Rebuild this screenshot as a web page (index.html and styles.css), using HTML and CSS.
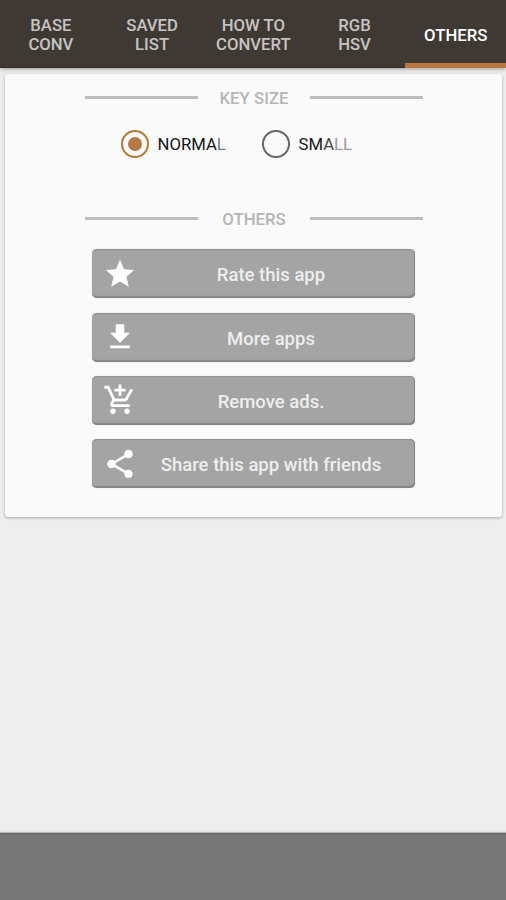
FILE: index.html
```html
<!DOCTYPE html>
<html lang="en">
<head>
<meta charset="utf-8">
<title>Others</title>
<link rel="stylesheet" href="styles.css">
</head>
<body>
<nav class="tabs">
  <a class="tab">BASE<br>CONV</a>
  <a class="tab">SAVED<br>LIST</a>
  <a class="tab">HOW TO<br>CONVERT</a>
  <a class="tab">RGB<br>HSV</a>
  <a class="tab active">OTHERS</a>
</nav>
<main class="card">
  <h2 class="heading"><span>KEY SIZE</span></h2>
  <div class="radios">
    <div class="radio checked"><i class="ring"></i><span>NORMA<span class="fade">L</span></span></div>
    <div class="radio"><i class="ring"></i><span>SM<span class="dim">A</span><span class="fade">LL</span></span></div>
  </div>
  <h2 class="heading"><span>OTHERS</span></h2>
  <div class="buttons">
    <button class="button"><svg viewBox="0 0 24 24"><path d="M12 17.27 18.18 21l-1.64-7.03L22 9.24l-7.19-.61L12 2 9.19 8.63 2 9.24l5.46 4.73L5.82 21z"/></svg><span>Rate this app</span></button>
    <button class="button"><svg viewBox="0 0 24 24"><path d="M19 9h-4V3H9v6H5l7 7 7-7zM5 18v2h14v-2H5z"/></svg><span>More apps</span></button>
    <button class="button"><svg viewBox="0 0 24 24"><path d="M11 9h2V6h3V4h-3V1h-2v3H8v2h3v3zm-4 9c-1.1 0-1.99.9-1.99 2S5.900 22 7 22s2-.9 2-2-.9-2-2-2zm10 0c-1.1 0-1.99.9-1.99 2s.89 2 1.990 2 2-.9 2-2-.9-2-2-2zm-9.830-3.250.03-.12.9-1.630h7.450c.75 0 1.410-.41 1.750-1.030l3.860-7.010L19.420 4h-.01l-1.100 2-2.760 5H8.530l-.13-.27L6.160 6l-.95-2-.94-2H1v2h2l3.600 7.590-1.350 2.450c-.16.28-.25.61-.25.960 0 1.100.9 2 2 2h12v-2H7.420c-.13 0-.25-.11-.25-.25z"/></svg><span>Remove ads.</span></button>
    <button class="button"><svg viewBox="0 0 24 24"><path d="M18 16.080c-.76 0-1.440.3-1.960.77L8.910 12.700c.05-.23.09-.46.09-.7s-.04-.47-.09-.7l7.050-4.110c.54.5 1.250.81 2.040.81 1.660 0 3-1.340 3-3s-1.340-3-3-3-3 1.340-3 3c0 .24.04.47.09.7L8.040 9.810C7.500 9.310 6.790 9 6 9c-1.660 0-3 1.340-3 3s1.340 3 3 3c.79 0 1.500-.31 2.040-.81l7.120 4.160c-.05.21-.08.43-.08.65 0 1.610 1.310 2.920 2.920 2.920s2.920-1.310 2.920-2.920-1.310-2.920-2.920-2.920z"/></svg><span>Share this app with friends</span></button>
  </div>
</main>
<footer class="banner"></footer>
</body>
</html>
```

FILE: styles.css
```css
* { box-sizing: border-box; }
body {
  margin: 0;
  height: 900px;
  display: flex;
  flex-direction: column;
  background: #eee;
  font-family: Roboto, sans-serif;
  overflow: hidden;
}
.tabs {
  display: grid;
  grid-template-columns: repeat(5, 1fr);
  height: 68px;
  flex: none;
  background: #3e3a33;
  border-bottom: 1px solid #302d29;
  box-shadow: 0 1px 4px rgba(0, 0, 0, .35);
}
.tab {
  display: flex;
  align-items: center;
  justify-content: center;
  text-align: center;
  padding: 1px 0 0 .6px;
  font-size: 16.7px;
  line-height: 19px;
  font-weight: 500;
  color: #c5c4c2;
}
.tab.active {
  color: #fff;
  height: 68px;
  padding-top: 7px;
  border-bottom: 5px solid #b87840;
}
.card {
  flex: none;
  margin: 6px 4px 0 5px;
  height: 443px;
  padding-top: 14px;
  background: #fafafa;
  border-radius: 3px;
  box-shadow: 0 1px 3px rgba(0, 0, 0, .3);
}
.heading {
  display: grid;
  grid-template-columns: 113px 112px 113px;
  align-items: center;
  width: 338px;
  margin: 0 0 0 80px;
  height: 20px;
  font-size: 16.8px;
  line-height: 20px;
  font-weight: 500;
  color: #b5b5b5;
  text-align: center;
}
.heading::before,
.heading::after {
  content: "";
  height: 3px;
  margin-top: -1px;
  background: #bdbdbd;
}
.radios {
  display: flex;
  height: 28px;
  margin: 22px 0 51px 116px;
}
.radio {
  display: flex;
  align-items: center;
  width: 141px;
  gap: 8.500px;
  font-size: 16.7px;
  color: #161616;
}
.ring {
  display: grid;
  place-items: center;
  width: 28px;
  height: 28px;
  border: 2.5px solid #666;
  border-radius: 50%;
}
.checked .ring { border-color: #b37a35; }
.checked .ring::after {
  content: "";
  width: 14px;
  height: 14px;
  border-radius: 50%;
  background: #b37a42;
}
.dim { color: #444; }
.fade { color: #999; }
.checked .fade { color: #777; }
.buttons {
  display: grid;
  grid-template-rows: repeat(4, 49px);
  row-gap: 14.3px;
  width: 323px;
  margin: 20.400px 0 0 87px;
}
.button {
  display: grid;
  grid-template-columns: 34px 1fr;
  align-items: center;
  padding: 0 0 0 11px;
  border: 0;
  border-radius: 5px;
  background: #a4a4a4;
  box-shadow: inset -1px -2px 1px #858585, inset 0 1px 1px #929292, 0 0 1px #aaa;
  font: 500 18.500px Roboto, sans-serif;
  color: #eee;
}
.button svg {
  width: 34px;
  height: 34px;
  fill: #fff;
}
.button span {
  padding: 3px 10px 0 0;
  text-align: center;
  white-space: nowrap;
}
.banner {
  flex: none;
  height: 67px;
  margin-top: auto;
  background: #767676;
  border-top: 1px solid #686868;
  box-shadow: 0 -1px 1px #bbb;
}
```
